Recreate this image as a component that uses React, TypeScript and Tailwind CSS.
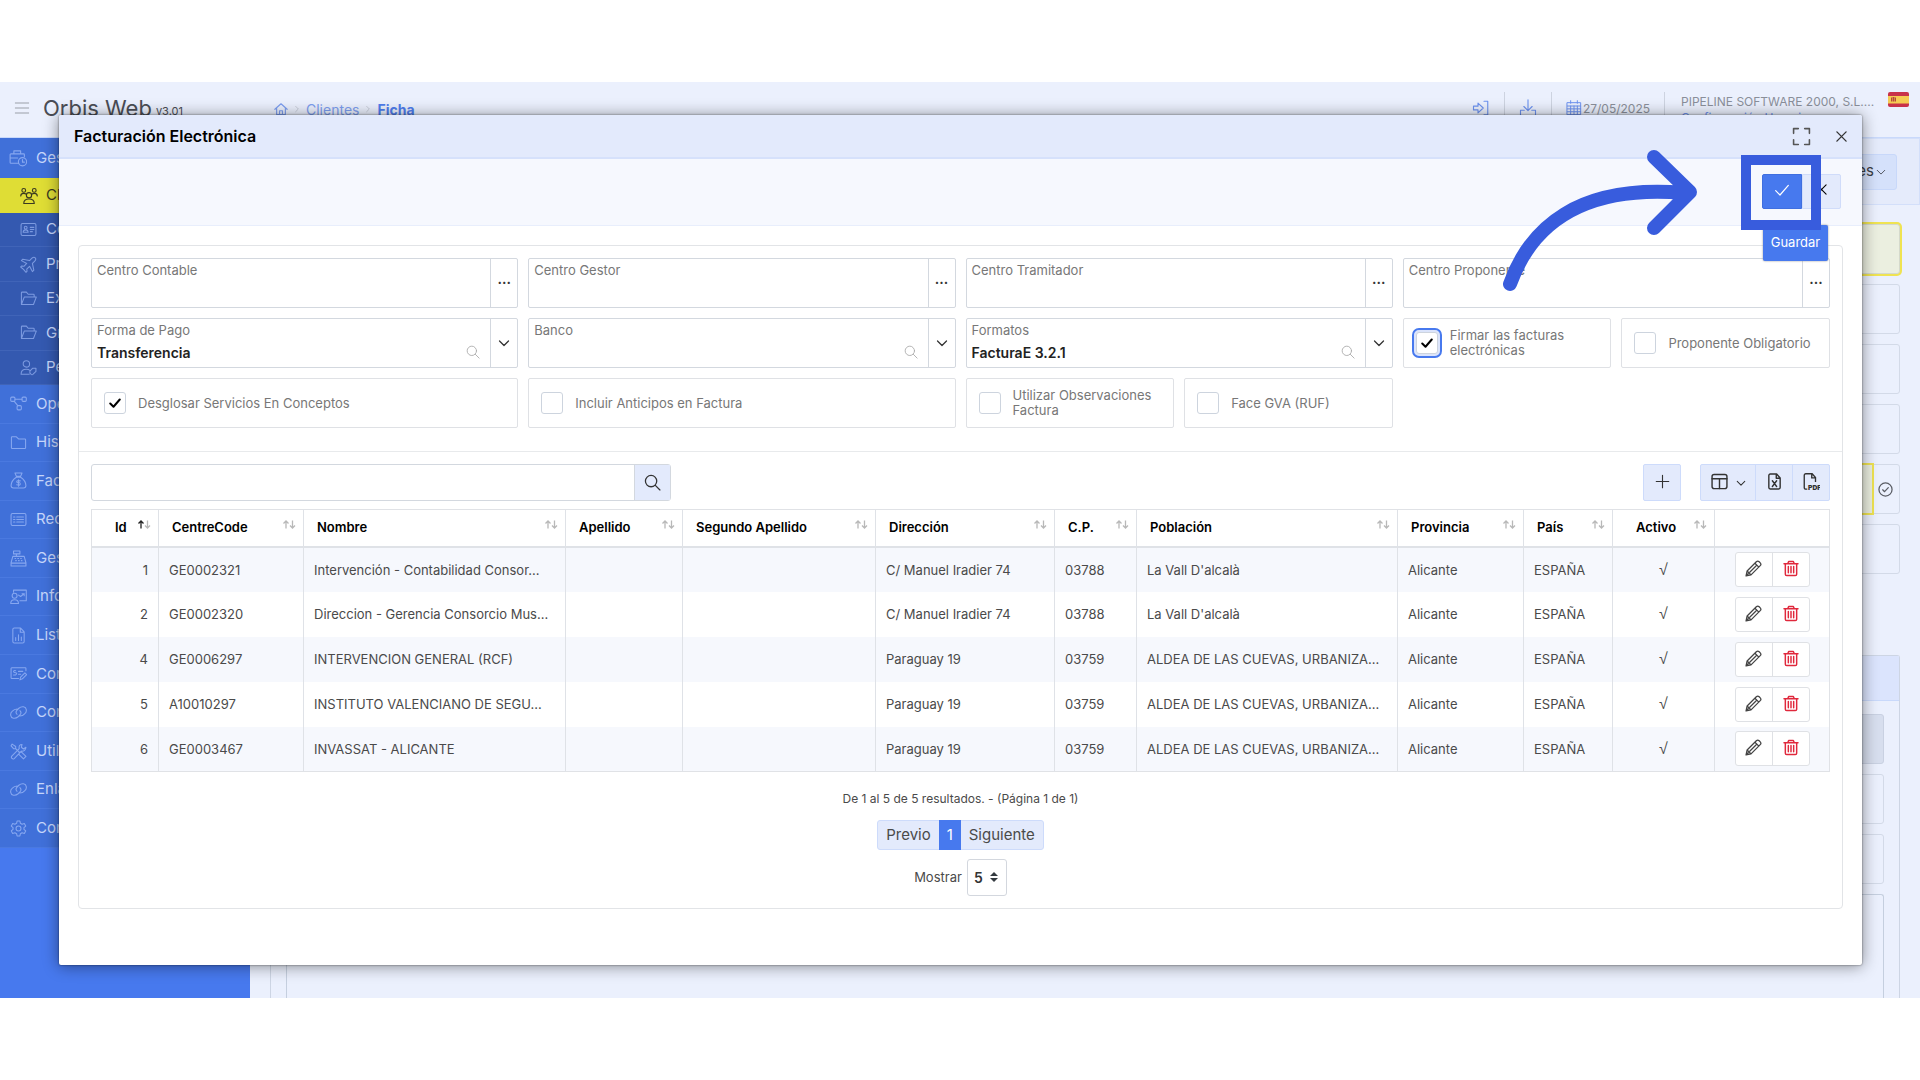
import { useState } from "react";
import type { ReactNode } from "react";
import clsx from "clsx";

const icons: Record<string, ReactNode> = {
  menu: <path d="M2 4.5h20M2 12h20M2 19.500h20" />,
  home: <path d="M1.500 12.500 12 3l10.500 9.500M4.500 10v11.500h15V10M9.500 21.500v-6.500h5v6.500" />,
  logout: <path d="M2 9.500h6V5.500l7 6.500-7 6.500v-4H2zM16 3h5v18h-5" />,
  download: <path d="M12 1v14M6.500 10l5.500 5.500L17.500 10M7 15H2v7h3M17 15h5v7h-3" />,
  calendar: <path d="M2 4h20v18H2zM2 9h20M2 13.300h20M2 17.600h20M7 9v13M12 9v13M17 9v13M7 1v4M17 1v4" />,
  expand: <path d="M2 8V2h6M16 2h6v6M22 16v6h-6M8 22H2v-6" />,
  close: <path d="M3.500 3.500l17 17M20.500 3.500l-17 17" />,
  check: <path d="M2.500 13l6.500 6.500L21.500 5" />,
  chevron: <path d="M3 8l9 9 9-9" />,
  angle: <path d="M8 4l8 8-8 8" />,
  search: (
    <>
      <circle cx="10" cy="10" r="8" />
      <path d="M16 16l6.500 6.500" />
    </>
  ),
  plus: <path d="M12 2v20M2 12h20" />,
  columns: (
    <>
      <rect x="1.500" y="2" width="21" height="20" rx="3" />
      <path d="M1.500 8h21M12 8v14" />
    </>
  ),
  excel: <path d="M15 1.500H6a2 2 0 0 0-2 2v17a2 2 0 0 0 2 2h12a2 2 0 0 0 2-2V7zM14.500 1.500V7.500H20M9 11l6 8M15 11l-6 8" />,
  pencil: <path d="M1.500 22.500l1.500-7L16 2.500q2-2 4 0l1.500 1.500q2 2 0 4L8.500 21zM3 15.500l5.500 5.500M14 4.500l5.500 5.500M7 17l8.500-8.500M1.500 22.500l3-3" />,
  trash: <path d="M1.500 5h21M7 5l1.500-3.500h7L17 5M3.500 5v15.500a2 2 0 0 0 2 2h13a2 2 0 0 0 2-2V5M8 9v9.500M12 9v9.500M16 9v9.500" />,
  circleCheck: (
    <>
      <circle cx="12" cy="12" r="10.500" />
      <path d="M7.500 12.500l3 3 6-6.500" />
    </>
  ),
  briefcase: (
    <>
      <path d="M13 19H2.500a1 1 0 0 1-1-1V7.500a1 1 0 0 1 1-1h17a1 1 0 0 1 1 1V10M6.500 6.500V2.500h9v4M1.500 12h10" />
      <circle cx="18" cy="17" r="5.500" />
      <path d="M18 14v3.500h2.500" />
    </>
  ),
  people: (
    <>
      <circle cx="5" cy="4.500" r="2.500" />
      <circle cx="19" cy="4.500" r="2.500" />
      <circle cx="12" cy="11" r="3.500" />
      <path d="M1 12q0-3.500 4-3.500 2 0 3 1M23 12q0-3.500-4-3.500-2 0-3 1M5 22q0-6 7-6t7 6z" />
    </>
  ),
  card: (
    <>
      <rect x="1.500" y="3.500" width="21" height="17" rx="2" />
      <circle cx="8" cy="9.500" r="2" />
      <path d="M4.500 16q0-3.500 3.500-3.500t3.500 3.500zM14.500 9h5M14.500 12h5M14.500 15h3" />
    </>
  ),
  plane: <path d="M21.500 2.500c-1.500-1.500-3.500-.5-5 1l-3 3L4 4.500 2 6.500l7.500 4-4 4L2.500 14 1 15.500l4 3.500 3.500 4 1.500-1.500-.5-3 4-4 4 7.500 2-2L17.500 10.500l3-3c1.500-1.500 2.500-3.500 1-5z" />,
  folderOpen: <path d="M2 20.500V4a1 1 0 0 1 1-1h6l2.500 3H19a1 1 0 0 1 1 1v3M2 20.500L6 10h17l-4 10.500z" />,
  userTag: (
    <>
      <circle cx="9" cy="7" r="4.500" />
      <path d="M1.500 21.500q0-7 7.500-7 3 0 5 1.500M1.500 21.500H13M14 17l4-4h4.500v4.500l-4 4a2 2 0 0 1-3 0L14 20z" />
    </>
  ),
  nodes: (
    <>
      <rect x="1" y="3" width="6" height="6" rx="1.500" />
      <rect x="17" y="3" width="6" height="6" rx="1.500" />
      <rect x="10" y="15" width="6" height="6" rx="1.500" />
      <path d="M7 6h10M6 9l5 6" />
    </>
  ),
  folder: <path d="M2 19.500V5a1 1 0 0 1 1-1h6l3 3h9a1 1 0 0 1 1 1v11.500a1 1 0 0 1-1 1H3a1 1 0 0 1-1-1z" />,
  sack: <path d="M7 1.500h10L15 6H9zM9 7.500Q2 12 1.500 19q0 3.500 3.500 3.500h14q3.500 0 3.500-3.500Q22 12 15 7.500zM14.500 12.500q-5-1-5 1t2.500 1.500 2.500 2-5 1M12 11v9" />,
  list: (
    <>
      <rect x="1.500" y="3.500" width="21" height="17" rx="2" />
      <path d="M5 8.500h2M9.500 8.500h9.500M5 12h2M9.500 12h9.500M5 15.500h2M9.500 15.500h9.500" />
    </>
  ),
  register: <path d="M5 1.500h9v4H5zM9 5.500V9M4 9h16l2.500 9v4.500h-21V18zM1.500 18.500h21M7 12h1M11 12h1M15 12h1M8 15h1M12 15h1M16 15h1" />,
  teacher: (
    <>
      <circle cx="6.500" cy="11" r="3.500" />
      <path d="M1 22q0-5.500 5.500-5.500T12 22zM5 6V3h18v15h-9M12 10l3 2 5-4M17 8h3v3" />
    </>
  ),
  chart: <path d="M15 1.500H6a2 2 0 0 0-2 2v17a2 2 0 0 0 2 2h12a2 2 0 0 0 2-2V7zM14.500 1.500V7.500H20M8 15v4M12 11v8M16 14v5" />,
  moneyPen: <path d="M12 19H2.500a1 1 0 0 1-1-1V5a1 1 0 0 1 1-1h19a1 1 0 0 1 1 1v3M8 8q-3-.5-3 1t3 2 0 3H5M12 9h6M12 13h3M14 21l1-4 6-6 2.500 2.500-6 6z" />,
  link: <path d="M10 14.500q-3-3 0-6l2.500-2.500q3-2.500 6.500-2t4 4-2 5.500q-3 3.500-7 3.500M14 9.500q3 3 0 6L11.500 18q-3 2.500-6.500 2t-4-4 2-5.500Q6 7 10 7" />,
  tools: <path d="M3 1.500l5 3.500v3l5 5 3-.5 6.500 6.500-3.500 3.500-6.500-6.500.5-3-5-5H5L1.500 4zM17 2q-5 0-4 6L2.500 18.500a2.500 2.500 0 0 0 3.500 3.500L16 11.500q6 .5 6.500-5.500L19 8.500 16 6z" />,
  gear: (
    <>
      <path d="M10 1.500h4l.7 3.200 2.300 1.300 3.200-1 2 3.500-2.500 2.300v2.400l2.500 2.300-2 3.500-3.200-1-2.300 1.300-.7 3.200h-4l-.7-3.200L7 18l-3.200 1-2-3.500 2.500-2.300v-2.400L1.800 8.500l2-3.500L7 6l2.300-1.300z" />
      <circle cx="12" cy="12" r="3.500" />
    </>
  ),
};

function Icon({ name, className, weight = 1.5 }: { name: string; className?: string; weight?: number }) {
  return (
    <svg
      viewBox="0 0 24 24"
      fill="none"
      stroke="currentColor"
      strokeWidth={weight}
      strokeLinejoin="round"
      strokeLinecap="round"
      className={clsx("shrink-0", className)}
      aria-hidden="true"
    >
      {icons[name]}
    </svg>
  );
}

function PdfIcon() {
  return (
    <svg viewBox="0 0 24 24" className="w-[18px] h-[18px]" aria-hidden="true">
      <path
        d="M7 21.500H5a2 2 0 0 1-2-2V3a2 2 0 0 1 2-2h8.500L18 6v6M13 1v5.500h5"
        fill="none"
        stroke="currentColor"
        strokeWidth="1.800"
      />
      <text x="8" y="23" fontSize="9" fontWeight="900" fill="currentColor">
        PDF
      </text>
    </svg>
  );
}

const subMenu = [
  { icon: "card", text: "Cont." },
  { icon: "plane", text: "Prov." },
  { icon: "folderOpen", text: "Exp." },
  { icon: "folderOpen", text: "Grup." },
  { icon: "userTag", text: "Pers." },
];

const menu = [
  { icon: "nodes", text: "Operac." },
  { icon: "folder", text: "Histór." },
  { icon: "sack", text: "Factur." },
  { icon: "list", text: "Recib." },
  { icon: "register", text: "Gest." },
  { icon: "teacher", text: "Inform." },
  { icon: "chart", text: "Listad." },
  { icon: "moneyPen", text: "Contab." },
  { icon: "link", text: "Conex." },
  { icon: "tools", text: "Utilid." },
  { icon: "link", text: "Enlac." },
  { icon: "gear", text: "Config." },
];

const columns = [
  { title: "Id", width: "w-[67px]" },
  { title: "CentreCode", width: "w-[145px]" },
  { title: "Nombre", width: "w-[262px]" },
  { title: "Apellido", width: "w-[117px]" },
  { title: "Segundo Apellido", width: "w-[193px]" },
  { title: "Dirección", width: "w-[179px]" },
  { title: "C.P.", width: "w-[82px]" },
  { title: "Población", width: "w-[261px]" },
  { title: "Provincia", width: "w-[126px]" },
  { title: "País", width: "w-[89px]" },
  { title: "Activo", width: "w-[102px]" },
];

const rows = [
  ["1", "GE0002321", "Intervención - Contabilidad Consor...", "", "", "C/ Manuel Iradier 74", "03788", "La Vall D'alcalà", "Alicante", "ESPAÑA"],
  ["2", "GE0002320", "Direccion - Gerencia Consorcio Mus...", "", "", "C/ Manuel Iradier 74", "03788", "La Vall D'alcalà", "Alicante", "ESPAÑA"],
  ["4", "GE0006297", "INTERVENCION GENERAL (RCF)", "", "", "Paraguay 19", "03759", "ALDEA DE LAS CUEVAS, URBANIZA...", "Alicante", "ESPAÑA"],
  ["5", "A10010297", "INSTITUTO VALENCIANO DE SEGU...", "", "", "Paraguay 19", "03759", "ALDEA DE LAS CUEVAS, URBANIZA...", "Alicante", "ESPAÑA"],
  ["6", "GE0003467", "INVASSAT - ALICANTE", "", "", "Paraguay 19", "03759", "ALDEA DE LAS CUEVAS, URBANIZA...", "Alicante", "ESPAÑA"],
];

function Field({ id, label, value = "", combo }: { id: string; label: string; value?: string; combo?: boolean }) {
  return (
    <div className="col-span-2 h-[50px] flex border border-[#d3d8df] rounded-[2px]">
      <div className="flex-1 min-w-0 pt-[3px] pl-[5px] pr-2.5">
        <label htmlFor={id} className="block text-[13px] leading-4 text-[#777]">
          {label}
        </label>
        <div className="flex items-center mt-1">
          <input
            id={id}
            defaultValue={value}
            className="flex-1 min-w-0 h-5 text-[14px] font-semibold text-[#222] outline-none"
          />
          {combo && <Icon name="search" className="w-[14px] h-[14px] text-[#aaa]" />}
        </div>
      </div>
      <button
        aria-label={"Buscar " + label}
        className="w-[27px] border-l border-[#d3d8df] flex items-center justify-center text-[#333]"
      >
        {combo ? (
          <Icon name="chevron" weight={2.5} className="w-3 h-3" />
        ) : (
          <span className="pb-2.5 text-[14px] font-semibold">...</span>
        )}
      </button>
    </div>
  );
}

function CheckField({ id, label, checked, wide, focused }: { id: string; label: string; checked?: boolean; wide?: boolean; focused?: boolean }) {
  return (
    <div
      className={clsx(
        "h-[50px] flex items-center gap-3 px-3 border border-[#dfe1e5] rounded-[2px]",
        wide && "col-span-2"
      )}
    >
      <div className="relative w-[22px] h-[22px] shrink-0">
        <input
          id={id}
          type="checkbox"
          defaultChecked={checked}
          className={clsx(
            "peer block appearance-none w-[22px] h-[22px] border border-[#cdd4de] rounded-[3px] bg-white",
            focused && "ring-2 ring-[#dbe4fb] outline-2 outline-offset-2 outline-[#4779ee]"
          )}
        />
        <Icon
          name="check"
          weight={4}
          className="w-3 h-3 text-black absolute top-[5px] left-[5px] pointer-events-none invisible peer-checked:visible"
        />
      </div>
      <label htmlFor={id} className="text-[13px] leading-[15px] text-[#777]">
        {label}
      </label>
    </div>
  );
}

function Sidebar() {
  return (
    <nav className="w-[250px] shrink-0 bg-[#4779ee] text-[15px] text-[#c6d6fb]">
      <a href="#gestion" className="flex items-center gap-[9px] h-10 pl-[9px] bg-[#4070d9]">
        <Icon name="briefcase" className="w-[18px] h-[18px] text-[#86a7f0]" />
        Gestión
      </a>
      <a href="#clientes" className="flex items-center gap-2 h-[35px] pl-5 bg-[#dfdd35] text-[#3a3a20]">
        <Icon name="people" className="w-[18px] h-[18px]" />
        Clientes
      </a>
      <div className="grid auto-rows-fr h-[172px] bg-[#3459b0]">
        {subMenu.map((item) => (
          <a key={item.text} href="#sub" className="flex items-center gap-[9px] pl-5 border-b border-[#4064b8]">
            <Icon name={item.icon} className="w-[17px] h-[17px] text-[#7c9ae0]" />
            {item.text}
          </a>
        ))}
      </div>
      <div className="grid auto-rows-fr h-[463px] bg-[#4070d9]">
        {menu.map((item) => (
          <a key={item.text} href="#menu" className="flex items-center gap-[9px] pl-[10px] border-b border-[#4a79e0]">
            <Icon name={item.icon} className="w-[17px] h-[17px] text-[#86a7f0]" />
            {item.text}
          </a>
        ))}
      </div>
    </nav>
  );
}

function TopBar() {
  return (
    <header className="h-[55px] shrink-0 flex items-start pt-[10px] text-[#8a8f9a]">
      <div className="w-[274px] flex items-center pl-[14px] h-8 text-[#4a4d55]">
        <button aria-label="Menú">
          <Icon name="menu" className="w-4 h-4 text-[#9a9fa8]" />
        </button>
        <span className="ml-[13px] text-[22px] leading-8">Orbis Web</span>
        <span className="ml-1 pt-1.5 text-[11px]">v3.01</span>
      </div>
      <div className="flex items-center gap-[5px] h-[34px] text-[14px] text-[#7d9ef0]">
        <Icon name="home" weight={2} className="w-[14px] h-[14px]" />
        <Icon name="angle" weight={2} className="w-2 h-2 text-[#b5bac5]" />
        <a href="#clientes">Clientes</a>
        <Icon name="angle" weight={2} className="w-2 h-2 text-[#b5bac5]" />
        <a href="#ficha" className="font-bold text-[#4f7ded]">
          Ficha
        </a>
      </div>
      <div className="ml-auto flex items-center h-8 text-[12px]">
        <Icon name="logout" className="w-[18px] h-[18px] text-[#6d92f0]" />
        <div className="w-[15px] h-8 border-r border-[#cdd3e0]" />
        <Icon name="download" className="w-[18px] h-[18px] ml-[14px] text-[#6d92f0]" />
        <div className="w-[15px] h-8 border-r border-[#cdd3e0]" />
        <Icon name="calendar" className="w-4 h-4 ml-[14px] mr-px text-[#6d92f0]" />
        <span className="pt-0.5">27/05/2025</span>
        <div className="w-[15px] h-8 border-r border-[#cdd3e0]" />
      </div>
      <div className="w-[198px] ml-4 mr-[9px] pt-0.5 text-[12px] leading-4 whitespace-nowrap">
        PIPELINE SOFTWARE 2000, S.L....
        <div className="text-[#6d92f0]">Configuración Usuario</div>
      </div>
      <svg viewBox="0 0 21 15" className="w-[21px] h-[15px] mr-[11px] shrink-0 rounded-[2px]" aria-hidden="true">
        <path d="M0 0h21v15H0z" fill="#c8324a" />
        <path d="M0 4h21v7.500H0z" fill="#f5cb52" />
        <path d="M3 5.500h1v4H3zM7 5.500h1v4H7zM4.500 5h2v4.500h-2z" fill="#b5473a" />
      </svg>
    </header>
  );
}

// Customer record that stays visible around the dialog
function Record() {
  return (
    <main className="flex-1 min-w-0 flex flex-col overflow-hidden">
      <div className="h-[67px] shrink-0 border border-[#d3dffa] bg-[#e5ebfb] flex items-center justify-end pr-[22px]">
        <button className="h-9 pl-4 pr-2.5 flex items-center gap-0.5 bg-[#d5e1fb] border border-[#c8d8fa] rounded-[3px] text-[15px] text-[#3a3d45]">
          Opciones
          <Icon name="chevron" weight={2} className="w-2.5 h-2.5" />
        </button>
      </div>
      <div className="px-5 pt-[19px] flex flex-col gap-[10px]">
        <div className="h-[50px] rounded-[3px] bg-[#ebefe0] border border-[#d4d9cc] ring-2 ring-[#efe352]" />
        <div className="h-[50px] rounded-[3px] border border-[#d3dae8]" />
        <div className="h-[50px] rounded-[3px] border border-[#d3dae8]" />
        <div className="h-[50px] rounded-[3px] border border-[#d3dae8]" />
        <div className="h-[50px] rounded-[3px] border border-[#d3dae8] flex">
          <div className="flex-1 bg-[#ebefe0] ring-2 ring-[#efe352]" />
          <div className="w-[27px] flex items-center justify-center text-[#5a5d65]">
            <Icon name="circleCheck" weight={2} className="w-[15px] h-[15px]" />
          </div>
        </div>
        <div className="h-[50px] rounded-[3px] border border-[#d3dae8]" />
      </div>
      <section className="flex-1 mt-[81px] mx-5 border-x border-t border-[#cdd5e4] rounded-t-[3px] flex flex-col">
        <div className="h-[45px] shrink-0 bg-[#dbe4fd] border-b border-[#c9d9fb]" />
        <div className="flex-1 px-[15px] pt-[13px] flex flex-col gap-[10px]">
          <div className="h-[50px] shrink-0 rounded-[3px] bg-[#d7deee] border border-[#c9d1e2]" />
          <div className="h-[50px] shrink-0 rounded-[3px] border border-[#d3dae8]" />
          <div className="h-[50px] shrink-0 rounded-[3px] border border-[#d3dae8]" />
          <div className="flex-1 rounded-t-[3px] border-x border-t border-[#c5cfdf]" />
        </div>
      </section>
    </main>
  );
}

function SortArrows({ active }: { active?: boolean }) {
  return (
    <svg viewBox="0 0 13 9" className="w-[13px] h-[9px] shrink-0 mb-1.5" fill="none" aria-hidden="true">
      <path d="M3 8.500v-7M.5 3.500L3 1l2.500 2.500" stroke={active ? "#222" : "#b8b8b8"} strokeWidth="1.300" />
      <path d="M9.500 .5v7M7 5.500L9.500 8 12 5.500" stroke="#b8b8b8" strokeWidth="1.300" />
    </svg>
  );
}

function CentresTable() {
  return (
    <table className="mt-2 w-full table-fixed border-collapse border border-[#e0e2e6] text-[13px] text-[#4a4a4a]">
      <thead>
        <tr className="h-[37px] border-b-2 border-[#dfe2e7] text-black">
          {columns.map((col, i) => (
            <th key={col.title} className={clsx("border-r border-[#dfe2e7] pl-[13px] pr-[7px] font-semibold", col.width)}>
              <div className="flex items-center justify-between">
                <span className={clsx((i === 0 || i === 10) && "pl-2.5")}>{col.title}</span>
                <SortArrows active={i === 0} />
              </div>
            </th>
          ))}
          <th className="w-[115px]" aria-label="Acciones" />
        </tr>
      </thead>
      <tbody>
        {rows.map((row) => (
          <tr key={row[0]} className="h-[45px] odd:bg-[#f6f8fd]">
            {row.map((cell, i) => (
              <td
                key={i}
                className={clsx(
                  "border-r border-[#dfe2e7] px-[10px] pt-0.5 whitespace-nowrap overflow-hidden",
                  i === 0 && "text-right"
                )}
              >
                {cell}
              </td>
            ))}
            <td className="border-r border-[#dfe2e7] text-center text-[16px] font-['Liberation_Sans']">√</td>
            <td>
              <div className="flex mx-auto w-[75px] h-[35px] bg-white border border-[#dfe1e5] rounded-[3px]">
                <button aria-label="Editar" className="flex-1 flex items-center justify-center border-r border-[#dfe1e5] pb-0.5 text-[#444]">
                  <Icon name="pencil" weight={1.8} className="w-[17px] h-[17px]" />
                </button>
                <button aria-label="Eliminar" className="flex-1 flex items-center justify-center pb-0.5 text-[#e0283c]">
                  <Icon name="trash" weight={2.2} className="w-4 h-[17px]" />
                </button>
              </div>
            </td>
          </tr>
        ))}
      </tbody>
    </table>
  );
}

function Dialog() {
  const [search, setSearch] = useState("");

  return (
    <div
      role="dialog"
      aria-label="Facturación Electrónica"
      className="absolute top-[33px] left-[59px] right-[58px] bg-white rounded-[2px] shadow-[0_0_2px_rgba(0,0,0,0.6),0_1px_16px_rgba(0,0,0,0.45)]"
    >
      <div className="h-11 flex items-center pl-[15px] pr-[14px] bg-[#e3eafc] border-b-2 border-[#d6e1fb] rounded-t-[2px]">
        <h1 className="text-[16px] font-semibold text-black">Facturación Electrónica</h1>
        <button aria-label="Maximizar" className="ml-auto mr-6 text-[#555]">
          <Icon name="expand" weight={2} className="w-[19px] h-[19px]" />
        </button>
        <button aria-label="Cerrar" className="text-[#333]">
          <Icon name="close" weight={2.5} className="w-[13px] h-[13px]" />
        </button>
      </div>

      <div className="h-[67px] flex justify-end items-start pt-[15px] pr-[21px] bg-[#f6f8fe] border-b border-[#e8eefc]">
        <div className="relative flex">
          <button aria-label="Guardar" className="w-10 h-[35px] flex items-center justify-center pb-1 bg-[#4779ee] border border-[#3f6fe0] text-white rounded-l-[2px]">
            <Icon name="check" weight={1.8} className="w-4 h-4" />
          </button>
          <button aria-label="Cancelar" className="w-[39px] h-[35px] flex items-center justify-center pb-1 bg-[#e3eafc] border border-[#d0dcfa] text-black rounded-r-[2px]">
            <Icon name="close" weight={2} className="w-[13px] h-[13px]" />
          </button>
          <div role="tooltip" className="absolute z-10 left-px top-[51px] w-[65px] h-9 flex items-center justify-center bg-[#4779ee] text-white text-[13px] rounded-[2px] shadow-[0_0_2px_#888]">
            Guardar
          </div>
          <div className="absolute z-20 -left-[21px] -top-[19px] w-20 h-[75px] border-[10px] border-[#385cdd]" />
          <svg viewBox="0 0 200 150" className="absolute z-20 w-[200px] h-[150px] right-[143px] -top-[28px] pointer-events-none" fill="none" stroke="#385cdd" strokeWidth="14" strokeLinecap="round" strokeLinejoin="round" aria-hidden="true">
            <path d="M12 138C32 82 80 38 186 47M156 11l36 35-36 36" />
          </svg>
        </div>
      </div>

      <div className="pt-[19px] px-[19px] pb-14">
        <div className="border border-[#e2e4e7] rounded-[4px]">
          <div className="grid grid-cols-8 gap-[10px] px-3 pb-[23px] pt-3 border-b border-[#e8eaec]">
            <Field id="contable" label="Centro Contable" />
            <Field id="gestor" label="Centro Gestor" />
            <Field id="tramitador" label="Centro Tramitador" />
            <Field id="proponente" label="Centro Proponente" />
            <Field id="pago" label="Forma de Pago" value="Transferencia" combo />
            <Field id="banco" label="Banco" combo />
            <Field id="formatos" label="Formatos" value="FacturaE 3.2.1" combo />
            <CheckField id="firmar" label="Firmar las facturas electrónicas" checked focused />
            <CheckField id="obligatorio" label="Proponente Obligatorio" />
            <CheckField id="desglosar" label="Desglosar Servicios En Conceptos" checked wide />
            <CheckField id="anticipos" label="Incluir Anticipos en Factura" wide />
            <CheckField id="observaciones" label="Utilizar Observaciones Factura" />
            <CheckField id="gva" label="Face GVA (RUF)" />
          </div>

          <div className="px-3 pt-3 pb-3">
            <div className="flex h-[37px] text-[#333]">
              <div className="flex w-1/3 border border-[#d3d8df] rounded-[3px]">
                <input
                  aria-label="Buscar"
                  value={search}
                  onChange={(e) => setSearch(e.target.value)}
                  className="flex-1 min-w-0 px-2 text-[14px] outline-none"
                />
                <button aria-label="Buscar centro" className="w-9 flex items-center justify-center bg-[#e3eafc] border-l border-[#d3d8df]">
                  <Icon name="search" weight={1.8} className="w-[17px] h-[17px]" />
                </button>
              </div>
              <button aria-label="Añadir" className="ml-auto w-[38px] flex items-center justify-center pb-0.5 bg-[#e3eafc] border border-[#cddbfb] rounded-[2px]">
                <Icon name="plus" weight={1.8} className="w-[15px] h-[15px]" />
              </button>
              <div className="ml-[19px] flex bg-[#e3eafc] border border-[#cddbfb] rounded-[2px]">
                <button aria-label="Columnas" className="w-[55px] flex items-center justify-center gap-2 border-r border-[#cddbfb]">
                  <Icon name="columns" weight={2} className="w-[17px] h-[17px] mb-0.5" />
                  <Icon name="chevron" weight={2.5} className="w-2.5 h-2.5" />
                </button>
                <button aria-label="Exportar a Excel" className="w-[37px] flex items-center justify-center pb-0.5 border-r border-[#cddbfb]">
                  <Icon name="excel" weight={2} className="w-[17px] h-[17px]" />
                </button>
                <button aria-label="Exportar a PDF" className="w-9 flex items-center justify-center pb-0.5">
                  <PdfIcon />
                </button>
              </div>
            </div>

            <CentresTable />

            <div className="flex flex-col items-center text-[#4a4a4a]">
              <p className="mt-[17px] text-[12px] leading-5">De 1 al 5 de 5 resultados. - (Página 1 de 1)</p>
              <div className="mt-[11px] flex h-[30px] text-[15px] bg-[#e3eafc] border border-[#cddbfb] rounded-[3px]">
                <button className="px-2">Previo</button>
                <button className="w-[22px] -my-px bg-[#4779ee] text-white">1</button>
                <button className="px-2">Siguiente</button>
              </div>
              <div className="mt-[9px] flex items-center gap-[5px]">
                <label htmlFor="mostrar" className="text-[13px]">
                  Mostrar
                </label>
                <div className="relative">
                  <select
                    id="mostrar"
                    defaultValue="5"
                    className="appearance-none w-10 h-[37px] pl-1.5 border border-[#d3d7de] rounded-[3px] bg-white text-[14px] font-semibold text-[#333]"
                  >
                    <option>5</option>
                    <option>10</option>
                    <option>25</option>
                  </select>
                  <svg viewBox="0 0 8 10" className="absolute right-[9px] top-[13px] w-2 h-2.5 pointer-events-none" fill="#343a40" aria-hidden="true">
                    <path d="M4 0l4 4H0zM0 6h8l-4 4z" />
                  </svg>
                </div>
              </div>
            </div>
          </div>
        </div>
      </div>
    </div>
  );
}

export default function App() {
  return (
    <div className="h-screen flex flex-col py-[82px] bg-white font-['Inter','Liberation_Sans',sans-serif]">
      <div className="relative flex-1 min-h-0 flex flex-col bg-[#ebf0fd]">
        <TopBar />
        <div className="flex-1 min-h-0 flex border-t border-[#c9d9fb]">
          <Sidebar />
          <Record />
        </div>
        <Dialog />
      </div>
    </div>
  );
}
